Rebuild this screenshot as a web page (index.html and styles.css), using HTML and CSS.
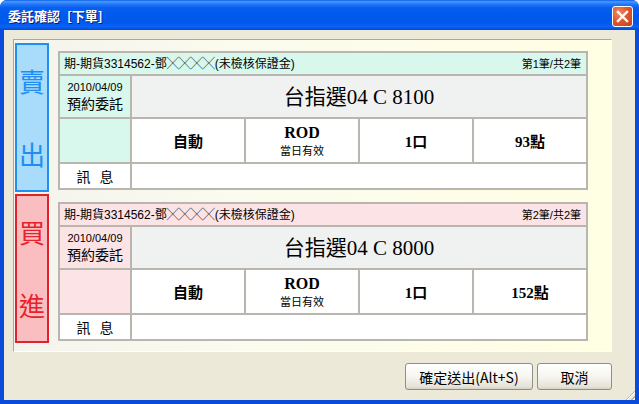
FILE: index.html
```html
<!DOCTYPE html>
<html lang="zh-Hant">
<head>
<meta charset="utf-8">
<title>委託確認</title>
<link rel="stylesheet" href="styles.css">
</head>
<body>
<div class="window">
  <div class="titlebar">
    <span class="title">委託確認 [下單]</span>
    <span class="close">
      <svg width="13" height="13" viewBox="0 0 13 13"><path d="M2 2 L11 11 M11 2 L2 11" stroke="#fff" stroke-width="2.4" stroke-linecap="square"/></svg>
    </span>
  </div>
  <div class="client">
    <div class="panel">
      <div class="order sell">
        <div class="side"><span>賣</span><span>出</span></div>
        <div class="ticket">
          <div class="head"><span>期-期貨3314562-鄧╳╳╳╳(未檢核保證金)</span><span class="count">第1筆/共2筆</span></div>
          <div class="tint date"><span class="d">2010/04/09</span><span class="k">預約委託</span></div>
          <div class="symbol">台指選04 C 8100</div>
          <div class="tint"></div>
          <div class="cell b">自動</div>
          <div class="cell rod"><span class="r">ROD</span><span class="s">當日有效</span></div>
          <div class="cell b serif">1口</div>
          <div class="cell b serif">93點</div>
          <div class="cell msg">訊 息</div>
          <div class="cell wide"></div>
        </div>
      </div>
      <div class="order buy">
        <div class="side"><span>買</span><span>進</span></div>
        <div class="ticket">
          <div class="head"><span>期-期貨3314562-鄧╳╳╳╳(未檢核保證金)</span><span class="count">第2筆/共2筆</span></div>
          <div class="tint date"><span class="d">2010/04/09</span><span class="k">預約委託</span></div>
          <div class="symbol">台指選04 C 8000</div>
          <div class="tint"></div>
          <div class="cell b">自動</div>
          <div class="cell rod"><span class="r">ROD</span><span class="s">當日有效</span></div>
          <div class="cell b serif">1口</div>
          <div class="cell b serif">152點</div>
          <div class="cell msg">訊 息</div>
          <div class="cell wide"></div>
        </div>
      </div>
    </div>
    <div class="actions">
      <button class="btn ok">確定送出(Alt+S)</button>
      <button class="btn cancel">取消</button>
    </div>
    <div class="grip"></div>
  </div>
</div>
</body>
</html>
```
FILE: styles.css
```css
html, body {
  margin: 0;
  padding: 0;
  background: #fff;
}
body {
  font-family: "Liberation Sans", "Noto Sans CJK TC", sans-serif;
  color: #000;
}
.window {
  width: 639px;
  height: 404px;
  display: flex;
  flex-direction: column;
  background: #0a4bdc;
  border-radius: 7px 7px 0 0;
  overflow: hidden;
}
.titlebar {
  height: 30px;
  flex: none;
  display: flex;
  align-items: center;
  justify-content: space-between;
  padding: 0 6px 0 8px;
  box-sizing: border-box;
  background: linear-gradient(180deg, #0a5ee8 0%, #4a9cff 6%, #2a7cf8 12%, #0860f0 25%, #0058ee 50%, #0058ec 75%, #0a62f6 90%, #0048d8 100%);
}
.title {
  color: #fff;
  font-family: "Noto Sans CJK TC", sans-serif;
  font-weight: bold;
  font-size: 13px;
  line-height: 16px;
  word-spacing: 4px;
  text-shadow: 1px 1px 0 #0a1a7a;
  margin-top: 1px;
}
.close {
  width: 21px;
  height: 21px;
  box-sizing: border-box;
  border: 1px solid #fff;
  border-radius: 3px;
  background: radial-gradient(circle at 30% 30%, #f08a66 0%, #e0582f 45%, #c8401c 100%);
  display: flex;
  align-items: center;
  justify-content: center;
  margin-top: 2px;
}
.client {
  position: relative;
  flex: 1;
  margin: 0 4px 4px 4px;
  background: #ece9d8;
  padding: 9px 23px 0 9px;
}
.panel {
  box-sizing: border-box;
  height: 313px;
  border-top: 1px solid #aca899;
  border-left: 1px solid #aca899;
  border-right: 1px solid #fff;
  border-bottom: 1px solid #fff;
  background: linear-gradient(90deg, #f4f4ee 0%, #fbfbee 40%, #ffffe4 100%);
  padding: 3px 0 0 1px;
  display: flex;
  flex-direction: column;
  gap: 2px;
}
.order {
  display: flex;
  gap: 9px;
  height: 149px;
}
.side {
  width: 34px;
  height: 149px;
  box-sizing: border-box;
  display: flex;
  flex-direction: column;
  align-items: center;
  padding-top: 22px;
  gap: 45px;
  font-family: "Noto Sans CJK TC", serif;
  font-size: 26px;
  line-height: 28px;
}
.sell .side {
  background: #a8dcfa;
  border: 2px solid #2090f0;
  color: #1e8ef4;
}
.buy .side {
  background: #fbbec0;
  border: 2px solid #e0222c;
  color: #e8222c;
}
.ticket {
  margin-top: 8px;
  width: 530px;
  height: 139px;
  box-sizing: border-box;
  display: grid;
  grid-template-columns: 70px repeat(4, 112px);
  grid-template-rows: 21px 41px 43px 24px;
  gap: 2px;
  padding: 2px;
  background: #b9b6b0;
}
.head {
  grid-column: 1 / -1;
  display: flex;
  justify-content: space-between;
  align-items: center;
  padding: 0 5px 0 4px;
  font-size: 12px;
  line-height: 14px;
}
.count {
  font-size: 11px;
}
.sell .head, .sell .tint { background: #d8f8ee; }
.buy .head, .buy .tint { background: #fce4e6; }
.date {
  display: flex;
  flex-direction: column;
  align-items: center;
  justify-content: center;
}
.date .d {
  font-size: 11px;
  line-height: 14px;
}
.date .k {
  font-family: "Noto Sans CJK TC", sans-serif;
  font-size: 14px;
  line-height: 19px;
}
.symbol {
  grid-column: 2 / -1;
  background: #f0f2f1;
  display: flex;
  align-items: center;
  justify-content: center;
  font-family: "Liberation Serif", "Noto Sans CJK TC", serif;
  font-size: 21px;
  line-height: 24px;
}
.cell {
  background: #fff;
  display: flex;
  align-items: center;
  justify-content: center;
}
.b {
  font-weight: bold;
  font-size: 15px;
  font-family: "Noto Sans CJK TC", sans-serif;
}
.serif {
  font-family: "Liberation Serif", "Noto Sans CJK TC", serif;
  font-size: 15px;
}
.rod {
  flex-direction: column;
  gap: 1px;
}
.rod .r {
  font-family: "Liberation Serif", serif;
  font-weight: bold;
  font-size: 16px;
  line-height: 18px;
}
.rod .s {
  font-family: "Noto Sans CJK TC", sans-serif;
  font-size: 11px;
  line-height: 14px;
}
.msg {
  font-family: "Noto Sans CJK TC", sans-serif;
  font-size: 14px;
  word-spacing: 6px;
}
.wide {
  grid-column: 2 / -1;
}
.actions {
  display: flex;
  justify-content: flex-end;
  gap: 4px;
  margin-top: 11px;
}
.btn {
  height: 27px;
  box-sizing: border-box;
  border: 1px solid #8f8f88;
  border-radius: 3px;
  background: linear-gradient(180deg, #ffffff 0%, #f6f5f0 50%, #e6e3d8 90%, #d6d2c6 100%);
  font-family: "Noto Sans CJK TC", sans-serif;
  font-size: 14px;
  line-height: 18px;
  color: #000;
  padding: 0;
}
.ok { width: 128px; }
.cancel { width: 75px; }
.grip {
  position: absolute;
  right: 0;
  bottom: 0;
  width: 12px;
  height: 12px;
  background: repeating-linear-gradient(135deg, transparent 0 2px, #b8b4a4 2px 3px, #fff 3px 4px);
  clip-path: polygon(100% 0, 100% 100%, 0 100%);
}
```
